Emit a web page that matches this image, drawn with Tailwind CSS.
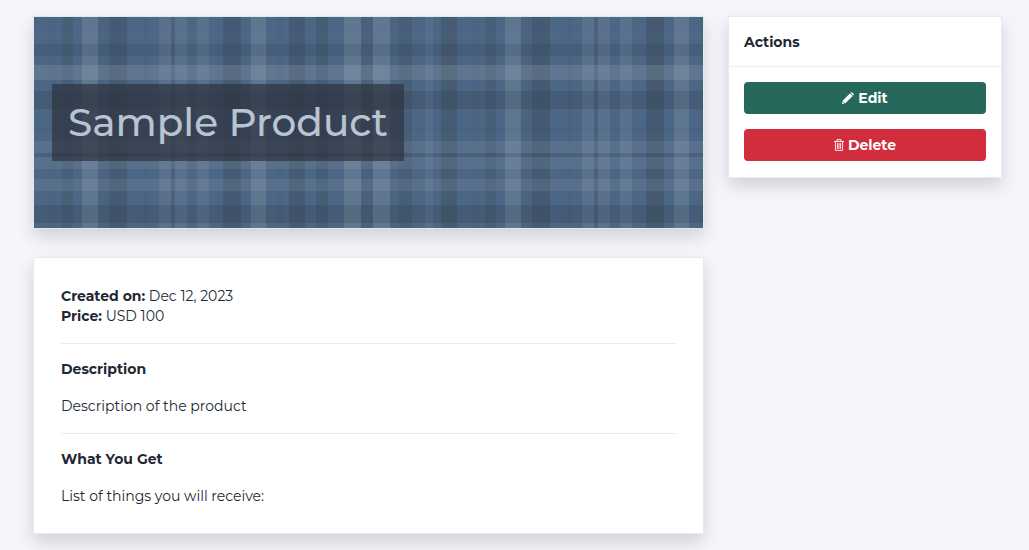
<!DOCTYPE html>
<html lang="en">
<head>
<meta charset="utf-8">
<meta name="viewport" content="width=device-width, initial-scale=1">
<title>Sample Product</title>
<script src="https://cdn.jsdelivr.net/npm/@tailwindcss/browser@4"></script>
</head>
<body class="min-h-screen bg-[#f5f6fb] font-['Montserrat','Inter',sans-serif] text-sm leading-5 text-[#212833]">
<div class="grid grid-cols-[minmax(0,671fr)_minmax(0,274fr)] items-start gap-6 pt-4 pr-[27px] pb-4 pl-[33px]">
  <main class="flex flex-col gap-7">
    <header class="relative flex border border-[#e2e8ec] px-[18px] py-[67px] shadow-[0_8px_16px_rgba(0,0,0,0.15)]">
      <svg class="absolute inset-0 h-full w-full" aria-hidden="true">
        <defs>
          <pattern id="cols" width="423" height="300" patternUnits="userSpaceOnUse">
            <g fill="#222">
              <rect x="15" width="7" height="300" opacity=".03"/>
              <rect x="28" width="11" height="300" opacity=".11"/>
              <rect x="64" width="11" height="300" opacity=".05"/>
              <rect x="75" width="18" height="300" opacity=".17"/>
              <rect x="109" width="6" height="300" opacity=".03"/>
              <rect x="137" width="4" height="300" opacity=".06"/>
              <rect x="189" width="18" height="300" opacity=".16"/>
              <rect x="243" width="6" height="300" opacity=".03"/>
              <rect x="255" width="16" height="300" opacity=".16"/>
              <rect x="282" width="12" height="300" opacity=".13"/>
              <rect x="327" width="12" height="300" opacity=".08"/>
              <rect x="356" width="9" height="300" opacity=".03"/>
              <rect x="365" width="13" height="300" opacity=".12"/>
              <rect x="407" width="16" height="300" opacity=".15"/>
            </g>
            <g fill="#ddd">
              <rect x="48" width="16" height="300" opacity=".13"/>
              <rect x="125" width="12" height="300" opacity=".09"/>
              <rect x="141" width="12" height="300" opacity=".09"/>
              <rect x="163" width="12" height="300" opacity=".09"/>
              <rect x="217" width="15" height="300" opacity=".13"/>
              <rect x="310" width="17" height="300" opacity=".14"/>
              <rect x="339" width="17" height="300" opacity=".14"/>
              <rect x="391" width="8" height="300" opacity=".07"/>
            </g>
          </pattern>
        </defs>
        <rect width="100%" height="100%" fill="#4c6685"/>
        <rect width="100%" height="100%" fill="url(#cols)"/>
        <g fill="#222">
          <rect y="27" width="100%" height="12" opacity=".11"/>
          <rect y="74" width="100%" height="18" opacity=".15"/>
          <rect y="110" width="100%" height="4" opacity=".03"/>
          <rect y="136" width="100%" height="4" opacity=".06"/>
          <rect y="188" width="100%" height="18" opacity=".15"/>
        </g>
        <g fill="#ddd">
          <rect y="16" width="100%" height="6" opacity=".02"/>
          <rect y="48" width="100%" height="15" opacity=".13"/>
          <rect y="124" width="100%" height="12" opacity=".09"/>
          <rect y="140" width="100%" height="12" opacity=".09"/>
          <rect y="162" width="100%" height="12" opacity=".09"/>
        </g>
      </svg>
      <h1 class="relative bg-[#2d333f]/70 px-4 py-[14px] text-[39px] leading-[49px] font-medium text-[#b8c4d2]">Sample Product</h1>
    </header>

    <section class="border border-[#e5ebee] bg-white p-[27px] pt-7 shadow-[0_8px_16px_rgba(0,0,0,0.15)]">
      <p><strong class="font-bold">Created on:</strong> Dec 12, 2023</p>
      <p><strong class="font-bold">Price:</strong> USD 100</p>
      <hr class="mt-[17px] mb-[15px] border-[#e9edef]">
      <h2 class="mb-[17px] font-bold">Description</h2>
      <p>Description of the product</p>
      <hr class="mt-[17px] mb-[15px] border-[#e9edef]">
      <h2 class="mb-[17px] font-bold">What You Get</h2>
      <p>List of things you will receive:</p>
    </section>
  </main>

  <aside class="border border-[#e5ebee] bg-white shadow-[0_8px_16px_rgba(0,0,0,0.15)]">
    <h2 class="border-b border-[#eceff1] px-[15px] pt-[15px] pb-[14px] font-bold">Actions</h2>
    <div class="flex flex-col gap-[15px] p-[15px] pb-4">
      <button type="button" class="flex h-8 items-center justify-center gap-1 rounded bg-[#26695c] font-bold text-white">
        <svg class="size-3" viewBox="0 0 12 12" fill="currentColor" aria-hidden="true"><path d="M8.600 .7 9 .4Q9.600 -.1 10.200 .5L11.500 1.800Q12.100 2.400 11.600 3L11.200 3.400ZM8 1.300 10.700 4 4.100 10.600 3.500 11.100 .3 11.900 0 11.600 .9 8.400 1.400 7.900ZM1.500 9.400 1.200 10.500 1.500 10.800 2.600 10.500Z" fill-rule="evenodd"/></svg>
        Edit
      </button>
      <button type="button" class="flex h-8 items-center justify-center gap-1 rounded bg-[#d12d3c] font-bold text-white">
        <svg class="h-3 w-[10px]" viewBox="0 0 10 12" fill="none" stroke="currentColor" aria-hidden="true"><path d="M0 2.500H10M3 2.500V.6H7V2.500M1.400 2.500V11.400H8.600V2.500M3.400 4V10M5 4V10M6.600 4V10" stroke-width=".9"/></svg>
        Delete
      </button>
    </div>
  </aside>
</div>
</body>
</html>
